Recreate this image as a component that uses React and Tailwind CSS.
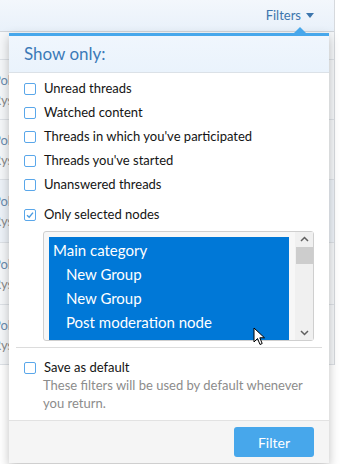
import React from "react";

const font = { fontFamily: '"Lato", "Open Sans", sans-serif' };

function Box({ checked }) {
  return (
    <span className="w-[12px] h-[12px] border border-[#5aa7ea] rounded-[2px] bg-white flex items-center justify-center shrink-0">
      {checked && (
        <svg width="8" height="8" viewBox="0 0 8 8">
          <path d="M1 4.2 L3.2 6.2 L7 1.6" fill="none" stroke="#4a9be0" strokeWidth="1.4" />
        </svg>
      )}
    </span>
  );
}

function Row({ label, checked }) {
  return (
    <label className="flex items-center gap-[8px] h-[24px]">
      <Box checked={checked} />
      <span className="text-[13px] text-[#141414]">{label}</span>
    </label>
  );
}

export default function App() {
  const bgRows = [
    { h: 28, blue: false },
    { h: 60, blue: false },
    { h: 60, blue: false },
    { h: 63, blue: true },
    { h: 62, blue: false },
    { h: 60, blue: false },
  ];
  return (
    <div className="relative w-[341px] h-[464px] overflow-hidden bg-white" style={font}>
      {/* background page */}
      <div className="flex flex-col w-[335px] border-r border-[#d6d9dd]">
        <div className="h-[32px] bg-gradient-to-b from-[#f3f7fc] to-[#e9f1fa] border-b border-[#cfd4da] flex items-center justify-end pr-[20px]">
          <span className="text-[13px] text-[#3d76ad] flex items-center gap-[5px]">
            Filters
            <svg width="8" height="5" viewBox="0 0 8 5"><path d="M0 0 H8 L4 5 Z" fill="#3d76ad" /></svg>
          </span>
        </div>
        {bgRows.map((r, i) => (
          <div
            key={i}
            className={`border-b border-[#dde1e6] flex flex-col justify-center text-[13px] leading-[20px] overflow-hidden ${r.blue ? "bg-[#edf2f8]" : "bg-[#f5f7f9]"}`}
            style={{ height: r.h }}
          >
            {i > 0 && (
              <>
                <span className="text-[#6b8db0] -ml-[7px] whitespace-nowrap">Poli</span>
                <span className="text-[#8a8a8a] -ml-[7px] whitespace-nowrap">Rys:</span>
              </>
            )}
          </div>
        ))}
      </div>

      {/* popup */}
      <div className="absolute left-[9px] top-[33px] w-[320px] bg-white border-t-[3px] border-[#47a7eb] shadow-[0_4px_10px_rgba(0,0,0,0.25)] flex flex-col">
        <div className="absolute -top-[9px] left-[284px] w-0 h-0 border-l-[7px] border-r-[7px] border-b-[7px] border-l-transparent border-r-transparent border-b-[#47a7eb]" />
        <div className="h-[37px] bg-gradient-to-b from-[#f0f6fd] to-[#eaf3fc] border-b border-[#dbe1e7] flex items-center pl-[15px]">
          <span className="text-[17px] text-[#3b7ab8]">Show only:</span>
        </div>
        <div className="flex flex-col px-[15px] pt-[4px]">
          <Row label="Unread threads" />
          <Row label="Watched content" />
          <Row label="Threads in which you've participated" />
          <Row label="Threads you've started" />
          <Row label="Unanswered threads" />
          <div className="h-[6px]" />
          <Row label="Only selected nodes" checked />
          <div className="ml-[19px] mt-[4px] w-[271px] h-[110px] border border-[#cfcfcf] rounded-[3px] bg-[#f7f7f7] flex p-[5px] pr-0 pb-0">
            <div className="flex-1 bg-[#0078d7] text-white text-[15px] leading-[24px] pt-[1px] flex flex-col relative">
              <span className="pl-[4px]">Main category</span>
              <span className="pl-[17px]">New Group</span>
              <span className="pl-[17px]">New Group</span>
              <span className="pl-[17px]">Post moderation node</span>
              <svg className="absolute left-[204px] top-[90px]" width="14" height="20" viewBox="0 0 14 20">
                <path d="M1 1 L1 15 L4.5 11.5 L7 17.5 L9.2 16.5 L6.8 10.8 L11.5 10.8 Z" fill="#ffffff" stroke="#000" strokeWidth="1" strokeLinejoin="round" />
              </svg>
            </div>
            <div className="w-[18px] ml-[6px] flex flex-col items-center bg-[#f0f0f0] -mt-[5px]">
              <svg className="mt-[4px]" width="9" height="6" viewBox="0 0 9 6"><path d="M1 5 L4.5 1.5 L8 5" fill="none" stroke="#606060" strokeWidth="1.5" /></svg>
              <div className="w-[17px] h-[17px] bg-[#cdcdcd] mt-[5px]" />
              <div className="flex-1" />
              <svg className="mb-[4px]" width="9" height="6" viewBox="0 0 9 6"><path d="M1 1 L4.5 4.5 L8 1" fill="none" stroke="#606060" strokeWidth="1.5" /></svg>
            </div>
          </div>
        </div>
        <div className="mx-[7px] mt-[6px] border-t border-[#dcdcdc]" />
        <div className="px-[15px] pt-[8px] pb-[8px]">
          <Row label="Save as default" />
          <p className="pl-[19px] -mt-[4px] text-[13px] leading-[18px] text-[#8c8c8c]">
            These filters will be used by default whenever you return.
          </p>
        </div>
        <div className="bg-[#f5f5f5] border-t border-[#e2e2e2] h-[43px] flex items-center justify-end pr-[15px]">
          <button className="w-[80px] h-[30px] rounded-[3px] bg-[#47a7eb] text-white text-[14px]">Filter</button>
        </div>
      </div>
    </div>
  );
}
